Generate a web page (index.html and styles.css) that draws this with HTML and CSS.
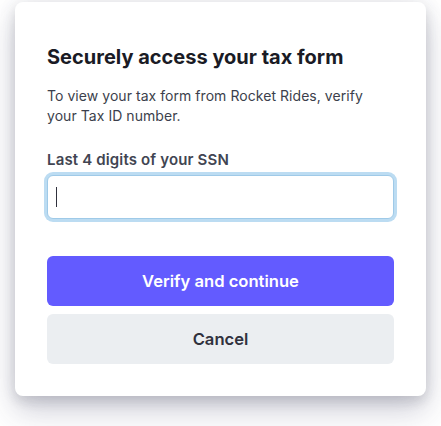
FILE: index.html
```html
<!DOCTYPE html>
<html lang="en">
<head>
<meta charset="utf-8">
<title>Securely access your tax form</title>
<link rel="stylesheet" href="styles.css">
</head>
<body>
<div class="page">
  <div class="card">
    <h1 class="title">Securely access your tax form</h1>
    <p class="desc">To view your tax form from Rocket Rides, verify your Tax ID number.</p>
    <label class="label" for="ssn">Last 4 digits of your SSN</label>
    <div class="field" id="ssn" role="textbox" aria-label="Last 4 digits of your SSN"><span class="caret"></span></div>
    <div class="actions">
      <button class="btn btn-primary" type="button">Verify and continue</button>
      <button class="btn btn-secondary" type="button">Cancel</button>
    </div>
  </div>
</div>
</body>
</html>
```

FILE: styles.css
```css
* { box-sizing: border-box; }
html, body {
  margin: 0;
  padding: 0;
  background: #ffffff;
  font-family: Inter, "Noto Sans", "Liberation Sans", sans-serif;
  -webkit-font-smoothing: antialiased;
}
.page {
  min-height: 426px;
  padding: 2px 15px 30px 15px;
}
.card {
  width: 411px;
  background: #ffffff;
  border-radius: 8px;
  padding: 41px 32px 32px 32px;
  box-shadow: 0 0 18px rgba(60, 66, 87, 0.09), 0 15px 30px rgba(50, 50, 93, 0.24), 0 6px 12px rgba(0, 0, 0, 0.09);
  display: flex;
  flex-direction: column;
}
.title {
  margin: 0;
  font-size: 20px;
  line-height: 28px;
  font-weight: 700;
  color: #1a1b25;
}
.desc {
  margin: 15px 0 0 0;
  font-size: 14px;
  line-height: 20px;
  font-weight: 400;
  letter-spacing: 0.05px;
  color: #3c3f4c;
}
.label {
  margin-top: 24px;
  font-size: 15px;
  line-height: 20px;
  font-weight: 600;
  letter-spacing: 0.15px;
  color: #414552;
}
.field {
  margin-top: 5px;
  height: 44px;
  border: 1px solid #9fcae8;
  border-radius: 6px;
  box-shadow: 0 0 0 3px #bcdcf2;
  background: #ffffff;
  display: flex;
  align-items: center;
  padding-left: 8px;
}
.caret {
  width: 1px;
  height: 20px;
  background: #30313d;
}
.actions {
  margin-top: 37px;
  display: flex;
  flex-direction: column;
  gap: 8px;
}
.btn {
  height: 50px;
  border: none;
  border-radius: 6px;
  font-family: inherit;
  font-size: 16.6px;
  font-weight: 600;
  cursor: pointer;
}
.btn-primary {
  background: #635bff;
  color: #ffffff;
}
.btn-secondary {
  background: #ebeef1;
  color: #30313d;
}
```
